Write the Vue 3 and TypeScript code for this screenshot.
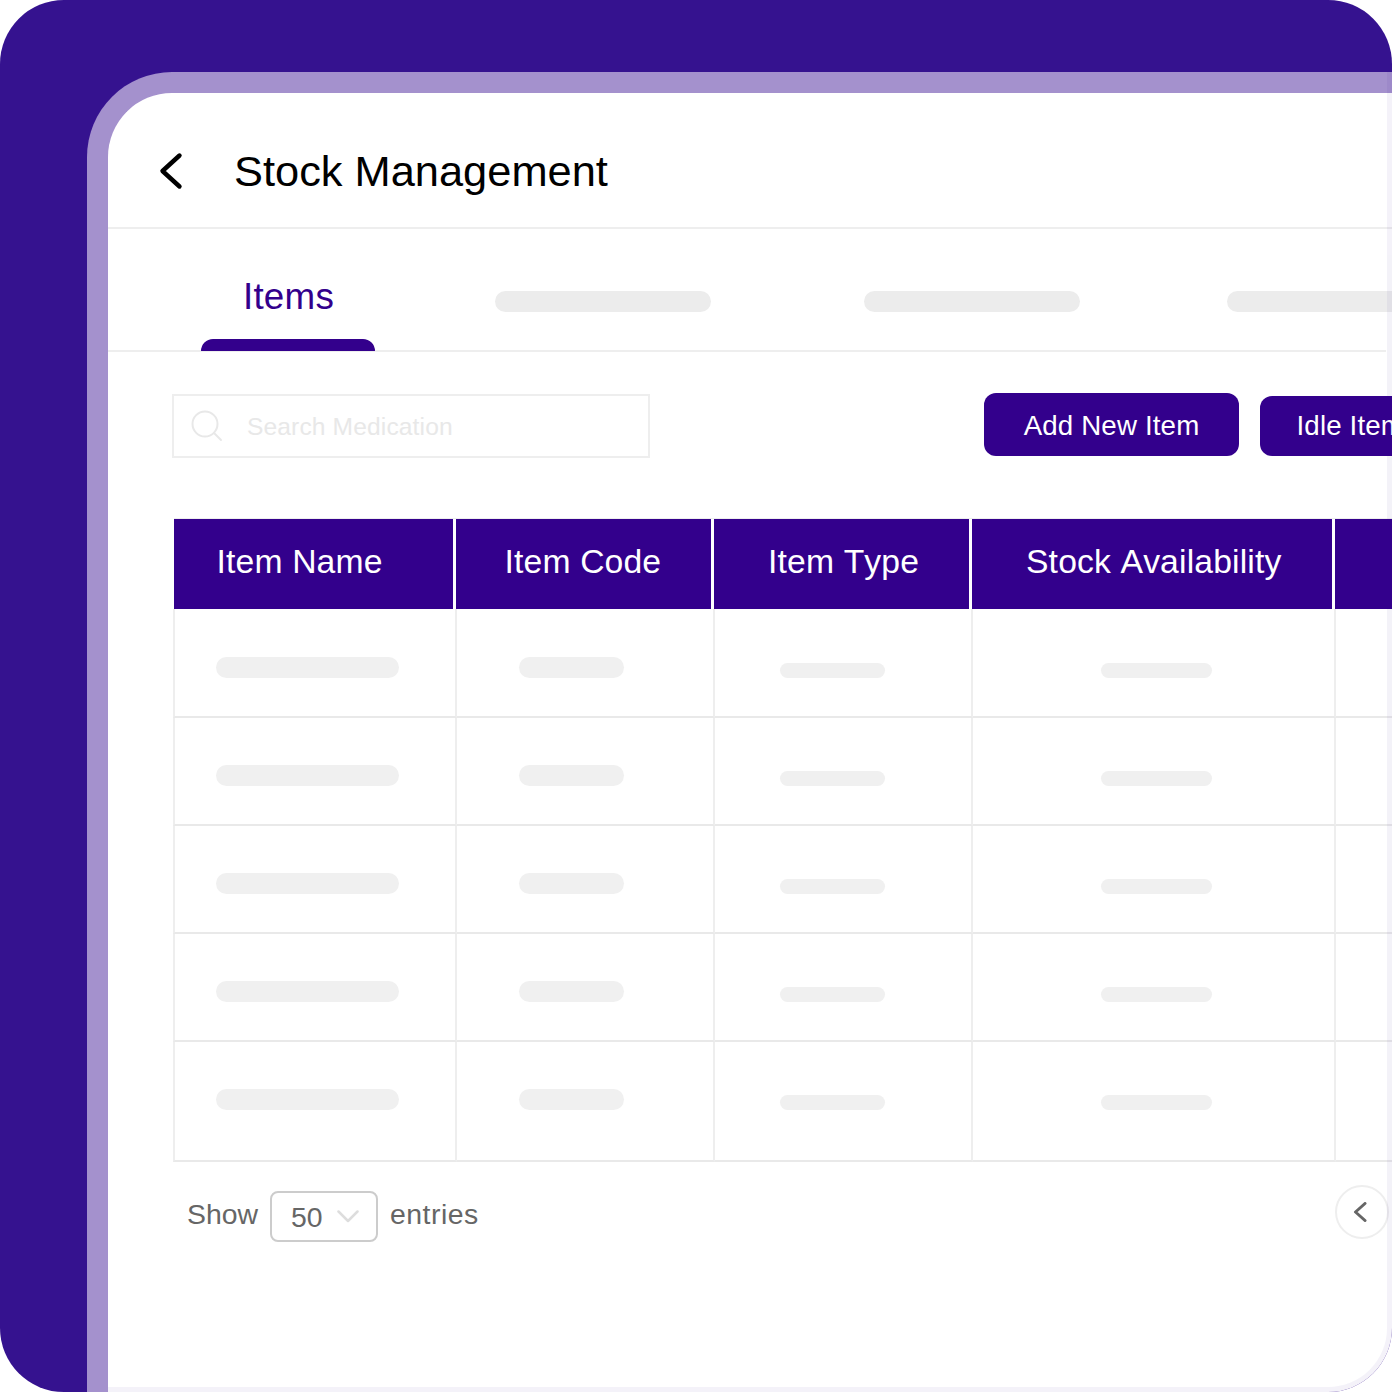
<script setup lang="ts">
const columns = [
  { label: 'Item Name', width: 279, pad: 42.5 },
  { label: 'Item Code', width: 255, pad: 48.5 },
  { label: 'Item Type', width: 255, pad: 54 },
  { label: 'Stock Availability', width: 360, pad: 54 },
  { label: '', width: 60, pad: 0 },
]

// skeleton placeholders per column
const cells = [
  { cls: 'cell--name', bar: 'bar--tall', width: 183, pad: 41 },
  { cls: 'cell--code', bar: 'bar--tall', width: 105, pad: 62 },
  { cls: 'cell--type', bar: 'bar--short', width: 105, pad: 65 },
  { cls: 'cell--stock', bar: 'bar--short', width: 111, pad: 128 },
  { cls: 'cell--rest', bar: '', width: 0, pad: 0 },
]

const rows = [1, 2, 3, 4, 5]
</script>

<template>
  <div class="frame">
    <div class="card">
      <header class="topbar">
        <svg class="back" width="28" height="40" viewBox="0 0 28 40" aria-hidden="true">
          <path d="M21.500 4.500 L4.500 20 L21.500 35.500" fill="none" stroke="#000" stroke-width="4.400" stroke-linecap="round" stroke-linejoin="round" />
        </svg>
        <h1 class="title">Stock Management</h1>
      </header>

      <nav class="tabs">
        <div class="tab-active">
          <span class="tab-label">Items</span>
          <span class="tab-marker"></span>
        </div>
        <span class="tab-skel tab-skel--1"></span>
        <span class="tab-skel tab-skel--2"></span>
        <span class="tab-skel tab-skel--3"></span>
      </nav>

      <div class="toolbar">
        <div class="search">
          <svg width="32" height="32" viewBox="0 0 32 32" aria-hidden="true">
            <circle cx="14" cy="14" r="12.500" fill="none" stroke="#e8e8e8" stroke-width="2" />
            <path d="M23 23 L30 30" stroke="#e8e8e8" stroke-width="2" stroke-linecap="round" />
          </svg>
          <span class="search-text">Search Medication</span>
        </div>
        <button class="btn btn--add">Add New Item</button>
        <button class="btn btn--idle">Idle Items</button>
      </div>

      <div class="table">
        <div class="thead">
          <div
            v-for="col in columns"
            :key="col.label"
            class="th"
            :style="{ width: col.width + 'px', paddingLeft: col.pad + 'px' }"
          >
            {{ col.label }}
          </div>
        </div>
        <div v-for="r in rows" :key="r" class="tr">
          <div v-for="cell in cells" :key="cell.cls" class="td" :class="cell.cls" :style="{ paddingLeft: cell.pad + 'px' }">
            <span v-if="cell.bar" class="bar" :class="cell.bar" :style="{ width: cell.width + 'px' }"></span>
          </div>
        </div>
      </div>

      <footer class="footer">
        <span class="entries-text">Show</span>
        <div class="select">
          <span class="select-value">50</span>
          <svg width="22" height="13" viewBox="0 0 22 13" aria-hidden="true">
            <path d="M1.500 1.500 L11 11 L20.500 1.500" fill="none" stroke="#dddddd" stroke-width="2.500" stroke-linecap="round" stroke-linejoin="round" />
          </svg>
        </div>
        <span class="entries-text entries-text--wide">entries</span>
        <button class="page-btn" aria-label="Previous page">
          <svg width="14" height="20" viewBox="0 0 14 20" aria-hidden="true">
            <path d="M12 1.500 L2.500 10 L12 18.500" fill="none" stroke="#666" stroke-width="3" stroke-linecap="round" stroke-linejoin="round" />
          </svg>
        </button>
      </footer>
    </div>
    <!-- faint translucent edge over the card's right and bottom -->
    <div class="edge" aria-hidden="true"></div>
  </div>
</template>

<style>
html,
body {
  margin: 0;
  background: #fff;
}
</style>

<style scoped>
.frame {
  position: relative;
  width: 1392px;
  height: 1392px;
  box-sizing: border-box;
  padding: 72px 0 0 87px;
  background: #35128f;
  border-radius: 64px;
  overflow: hidden;
  font-family: 'Liberation Sans', Arial, sans-serif;
  font-kerning: none;
}

.card {
  width: 1305px;
  height: 1320px;
  box-sizing: border-box;
  background: #fff;
  border-style: solid;
  border-width: 21px 0 0 21px;
  border-color: #a491cd;
  border-top-left-radius: 85px;
}

.edge {
  position: absolute;
  top: 72px;
  left: 108px;
  right: 0;
  bottom: 0;
  box-sizing: border-box;
  border-right: 5px solid rgba(53, 18, 143, 0.05);
  border-bottom: 5px solid rgba(53, 18, 143, 0.05);
  border-bottom-right-radius: 64px;
  pointer-events: none;
}

/* top bar */
.topbar {
  display: flex;
  align-items: center;
  height: 136px;
  box-sizing: border-box;
  padding: 22px 0 0 50px;
  border-bottom: 2px solid #eeeeee;
}
.back {
  flex-shrink: 0;
}
.title {
  margin: 0 0 0 48px;
  font-size: 43.400px;
  font-weight: 400;
  color: #000;
}

/* tabs */
.tabs {
  display: flex;
  width: 1278px;
  height: 123px;
  box-sizing: border-box;
  border-bottom: 2px solid #eeeeee;
}
.tab-active {
  flex-shrink: 0;
  width: 174px;
  margin-left: 93px;
  display: flex;
  flex-direction: column;
  align-items: center;
}
.tab-label {
  margin: 47px 0 0 1px;
  font-size: 36.800px;
  line-height: 42px;
  letter-spacing: 0.2px;
  color: #33008c;
}
.tab-marker {
  align-self: stretch;
  height: 12px;
  margin-top: auto;
  margin-bottom: -1px;
  background: #33008c;
  border-radius: 12px 12px 0 0;
}
.tab-skel {
  flex-shrink: 0;
  height: 21px;
  margin-top: 62px;
  border-radius: 11px;
  background: #ececec;
}
.tab-skel--1 {
  width: 216px;
  margin-left: 120px;
}
.tab-skel--2 {
  width: 216px;
  margin-left: 153px;
}
.tab-skel--3 {
  width: 216px;
  margin-left: 147px;
}

/* search and buttons */
.toolbar {
  display: flex;
  align-items: flex-start;
  height: 166px;
  padding: 41px 0 0 64px;
  box-sizing: border-box;
  overflow: hidden;
}
.search {
  flex-shrink: 0;
  display: flex;
  align-items: center;
  width: 478px;
  height: 64px;
  margin-top: 1px;
  padding-left: 17px;
  box-sizing: border-box;
  border: 2px solid #eeeeee;
}
.search-text {
  margin: 2px 0 0 24px;
  font-size: 24.600px;
  letter-spacing: 0.12px;
  color: #e8e8e8;
}
.btn {
  flex-shrink: 0;
  padding: 2px 0 0;
  border: none;
  border-radius: 12px;
  background: #33008c;
  color: #fff;
  font-family: inherit;
  font-size: 27.700px;
  letter-spacing: 0.15px;
}
.btn--add {
  width: 255px;
  height: 63px;
  margin-left: 334px;
}
.btn--idle {
  width: 200px;
  height: 60px;
  margin-top: 3px;
  margin-left: 21px;
  padding: 0 0 0 36.500px;
  text-align: left;
}

/* table */
.table {
  margin-left: 65px;
  overflow: hidden;
}
.thead {
  display: flex;
  gap: 3px;
  height: 91px;
  margin-left: 1px;
  border-top: 1px solid #eeeeee;
  box-sizing: border-box;
}
.th {
  flex-shrink: 0;
  height: 90px;
  box-sizing: border-box;
  padding-top: 21px;
  background: #33008c;
  color: #fff;
  font-size: 33.700px;
  line-height: 42px;
  letter-spacing: 0.15px;
  white-space: nowrap;
}
.tr {
  display: grid;
  grid-template-columns: 284px 258px 258px 363px 100px;
  height: 108px;
}
.thead + .tr {
  height: 109px;
}
.tr:last-child {
  height: 120px;
}
.td {
  box-sizing: border-box;
  border-right: 2px solid #eeeeee;
  border-bottom: 2px solid #e9e9e9;
}
.cell--name {
  border-left: 2px solid #eeeeee;
}
.cell--rest {
  border-right: none;
}
.bar {
  display: block;
  background: #f0f0f0;
}
.bar--tall {
  height: 21px;
  margin-top: 47px;
  border-radius: 11px;
}
.bar--short {
  height: 15px;
  margin-top: 53px;
  border-radius: 8px;
}
.thead + .tr .bar--tall {
  margin-top: 48px;
}
.thead + .tr .bar--short {
  margin-top: 54px;
}

/* footer */
.footer {
  display: flex;
  align-items: flex-start;
  padding: 29px 5px 0 79px;
}
.entries-text {
  margin-top: 7px;
  font-size: 28.400px;
  line-height: 32px;
  color: #666666;
}
.entries-text--wide {
  letter-spacing: 0.5px;
}
.select {
  flex-shrink: 0;
  display: flex;
  align-items: center;
  gap: 14px;
  width: 108px;
  height: 51px;
  margin: 0 12px;
  padding-left: 19px;
  box-sizing: border-box;
  border: 2px solid #cccccc;
  border-radius: 8px;
}
.select-value {
  margin-top: 1px;
  font-size: 28.400px;
  color: #666666;
}
.page-btn {
  flex-shrink: 0;
  display: flex;
  align-items: center;
  justify-content: center;
  width: 54px;
  height: 54px;
  margin-left: auto;
  margin-right: -2px;
  margin-top: -6px;
  padding: 0 5px 0 0;
  border: 2px solid #eeeeee;
  border-radius: 50%;
  background: transparent;
}
</style>
